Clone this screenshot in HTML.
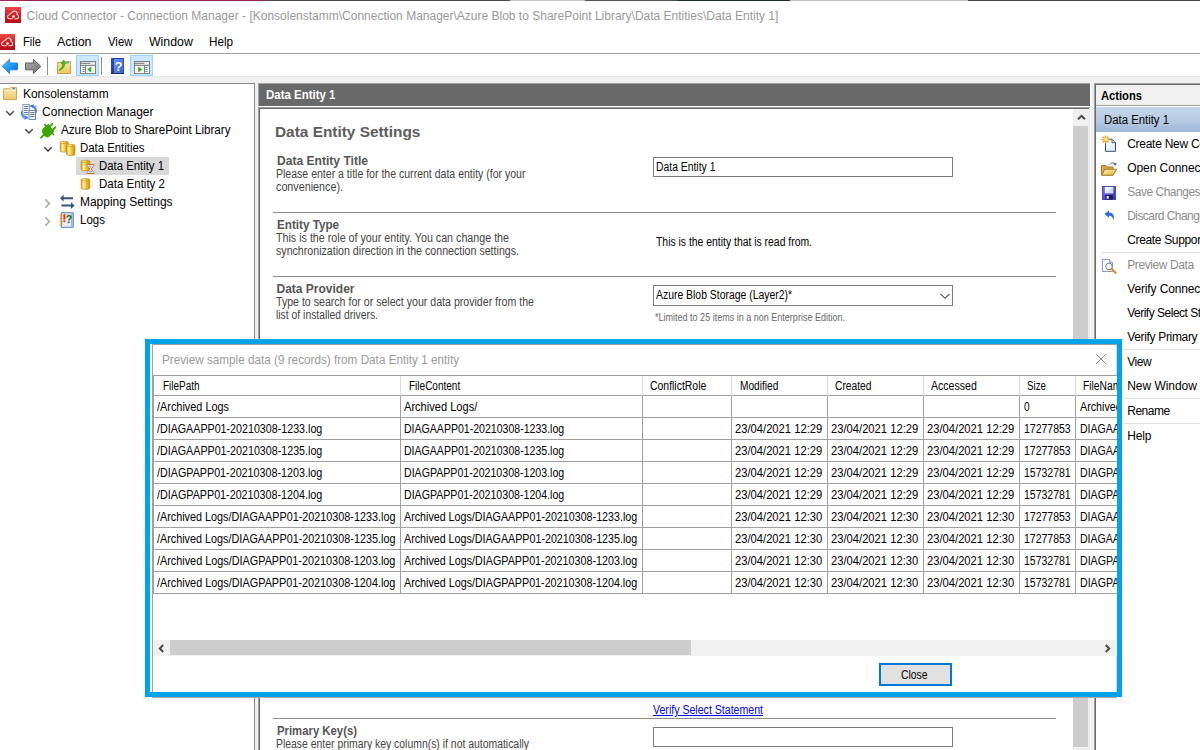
<!DOCTYPE html><html lang="en"><head><meta charset="utf-8"><title>Cloud Connector - Connection Manager</title><style>
*{box-sizing:border-box}
html,body{margin:0;padding:0}
body{width:1200px;height:750px;overflow:hidden;background:#fff;position:relative;
 font-family:"Liberation Sans",sans-serif;font-size:12px;color:#000}
.abs,span,a,h1,h2,p,li,div,svg,button,input,label,table{position:absolute}
td,th{position:relative;padding:0;font-weight:normal;overflow:hidden}
span,a,h1,h2,p,label{white-space:pre;margin:0;font-weight:normal}
ul{list-style:none;margin:0;padding:0}
.hl{background:#cce8ff;border:1px solid #99d1ff}
.sep{background:#8d8d8d;width:1px}
.line{height:1px;background:#a0a0a0}
</style></head><body>
<div style="left:0;top:0;width:1200px;height:1px;background:linear-gradient(90deg,#a5234f 0,#a5234f 265px,#4a4a4a 265px,#4a4a4a 510px,#c8c8c8 510px,#c8c8c8 585px,#555 585px,#555 677px,#20302c 677px,#20302c 790px,#bbb 790px,#bbb 968px,#444 968px)"></div>
<header style="position:absolute;left:0;top:1px;width:1200px;height:29px;background:#fff">
<svg style="left:5px;top:6px" width="16" height="16" viewBox="0 0 16 16">
<defs><linearGradient id="rg5" x1="0" y1="0" x2="0" y2="1"><stop offset="0" stop-color="#f04848"/><stop offset="0.5" stop-color="#d81c24"/><stop offset="1" stop-color="#b40f16"/></linearGradient></defs>
<rect width="16" height="16" fill="url(#rg5)"/>
<path d="M7.4 11.7 L4.6 11.7 C2.2 11.7 1.6 8.8 4 7.9 C4.6 7 5.6 6.4 6.4 5.9 C7.4 4.6 9 3.8 10.4 4.2 C11.8 4.6 12.4 6.2 12 7.6 C14.2 8.2 14.2 11.7 11.8 11.7 L9.9 11.7" fill="none" stroke="#fff" stroke-opacity="0.85" stroke-width="1.05" stroke-linecap="round" stroke-linejoin="round"/>
<circle cx="8.5" cy="9.5" r="1.35" fill="#fff"/>
</svg>
<span style="left:26.60px;top:8px;font-size:12px;line-height:14px;color:#999;">Cloud Connector - Connection Manager - [Konsolenstamm\Connection Manager\Azure Blob to SharePoint Library\Data Entities\Data Entity 1]</span>
</header>
<nav style="position:absolute;left:0;top:30px;width:1200px;height:24px;background:#fff;border-bottom:1px solid #a0a0a0">
<svg style="left:-1px;top:4px" width="16" height="16" viewBox="0 0 16 16">
<defs><linearGradient id="rg-1" x1="0" y1="0" x2="0" y2="1"><stop offset="0" stop-color="#f04848"/><stop offset="0.5" stop-color="#d81c24"/><stop offset="1" stop-color="#b40f16"/></linearGradient></defs>
<rect width="16" height="16" fill="url(#rg-1)"/>
<path d="M7.4 11.7 L4.6 11.7 C2.2 11.7 1.6 8.8 4 7.9 C4.6 7 5.6 6.4 6.4 5.9 C7.4 4.6 9 3.8 10.4 4.2 C11.8 4.6 12.4 6.2 12 7.6 C14.2 8.2 14.2 11.7 11.8 11.7 L9.9 11.7" fill="none" stroke="#fff" stroke-opacity="0.85" stroke-width="1.05" stroke-linecap="round" stroke-linejoin="round"/>
<circle cx="8.5" cy="9.5" r="1.35" fill="#fff"/>
</svg>
<span style="left:23.40px;top:5px;font-size:12px;line-height:14px;transform:scaleX(0.9254);transform-origin:0 0;">File</span>
<span style="left:57.30px;top:5px;font-size:12px;line-height:14px;transform:scaleX(1.0342);transform-origin:0 0;">Action</span>
<span style="left:108.30px;top:5px;font-size:12px;line-height:14px;transform:scaleX(0.9459);transform-origin:0 0;">View</span>
<span style="left:149.00px;top:5px;font-size:12px;line-height:14px;transform:scaleX(1.0261);transform-origin:0 0;">Window</span>
<span style="left:209.30px;top:5px;font-size:12px;line-height:14px;transform:scaleX(0.9762);transform-origin:0 0;">Help</span>
</nav>
<div style="left:0;top:54px;width:1200px;height:22px;background:#fff">
<svg style="left:1px;top:4px" width="18" height="17" viewBox="0 0 18 17">
<defs><linearGradient id="ba" x1="0" y1="0" x2="1" y2="1"><stop offset="0" stop-color="#5ec0ff"/><stop offset="0.55" stop-color="#1e9af0"/><stop offset="1" stop-color="#0058c0"/></linearGradient></defs>
<path d="M1.2 8.4 L8.6 1.3 L8.6 5.0 L16.5 5.0 L16.5 11.8 L8.6 11.8 L8.6 15.6 Z" fill="url(#ba)" stroke="#2f86d8" stroke-width="1" stroke-linejoin="round"/>
</svg>
<svg style="left:24px;top:4px" width="18" height="17" viewBox="0 0 18 17">
<defs><linearGradient id="fa" x1="0" y1="0" x2="1" y2="1"><stop offset="0" stop-color="#b4b4b4"/><stop offset="0.55" stop-color="#8c8c8c"/><stop offset="1" stop-color="#6e6e6e"/></linearGradient></defs>
<path d="M16.8 8.4 L9.4 1.3 L9.4 5.0 L1.5 5.0 L1.5 11.8 L9.4 11.8 L9.4 15.6 Z" fill="url(#fa)" stroke="#5c5c5c" stroke-width="1" stroke-linejoin="round"/>
</svg>
<div class="sep" style="left:47px;top:3px;height:18px"></div>
<svg style="left:56px;top:4px" width="17" height="17" viewBox="0 0 17 17">
<defs><linearGradient id="fo" x1="0" y1="0" x2="0" y2="1"><stop offset="0" stop-color="#fbe7a2"/><stop offset="1" stop-color="#edc660"/></linearGradient></defs>
<path d="M1.5 4.5 L9 4.5 L10 3.5 L14.5 3.5 L14.5 15.5 L1.5 15.5 Z" fill="url(#fo)" stroke="#c9a14a" stroke-width="1"/>
<path d="M1.5 6.5h13" stroke="#f7dc8c" stroke-width="1"/>
<rect x="10.5" y="4" width="2.5" height="1.3" fill="#4a90e0"/>
<path d="M3.2 11.5 C5.5 10.5 6.5 8.5 6.6 5.5 L5 5.5 L7.6 2 L10.4 5.5 L8.8 5.5 C8.8 9 7 11.3 3.6 12.4 Z" fill="#3ec020" stroke="#2a9a10" stroke-width="0.5"/>
</svg>
<div class="hl" style="left:76px;top:1px;width:23px;height:21px"></div>
<svg style="left:80px;top:7px" width="16" height="13" viewBox="0 0 16 13">
<rect x="0.5" y="0.5" width="15" height="12" fill="#fff" stroke="#808080"/>
<rect x="1" y="1" width="14" height="3.5" fill="#d9d9d9"/>
<path d="M1 2.5h9" stroke="#8a8a8a" stroke-width="1"/>
<path d="M1 4.5h14" stroke="#8a8a8a" stroke-width="1"/>
<rect x="11" y="1.5" width="1.4" height="1.4" fill="#fff"/><rect x="13" y="1.5" width="1.4" height="1.4" fill="#fff"/>
<rect x="1.5" y="5.5" width="4" height="6" fill="#fff" stroke="none"/>
<rect x="6" y="5.5" width="8.5" height="6" fill="#f4f4f4"/>
<path d="M2.5 6.5h2M2.5 8.5h2M2.5 10.5h2" stroke="#3a78d8" stroke-width="1"/>
<path d="M5.5 5v7" stroke="#808080" stroke-width="1"/>
<path d="M11 6 L11 11 L7.6 8.5 Z" fill="#3cb41e" stroke="#2e9a14" stroke-width="0.5"/>
</svg>
<div class="sep" style="left:101px;top:3px;height:18px"></div>
<svg style="left:111px;top:4px" width="13" height="16" viewBox="0 0 13 16">
<defs><linearGradient id="hb" x1="0" y1="0" x2="1" y2="1"><stop offset="0" stop-color="#7094f0"/><stop offset="1" stop-color="#3a60d0"/></linearGradient><linearGradient id="hs" x1="0" y1="0" x2="0" y2="1"><stop offset="0" stop-color="#2054d0"/><stop offset="1" stop-color="#2a3a7a"/></linearGradient></defs>
<rect width="13" height="16" fill="#1f3fae"/>
<rect x="0" y="0" width="3" height="16" fill="url(#hs)"/>
<rect x="3" y="1" width="9.4" height="14.2" fill="url(#hb)"/>
<rect x="0" y="15" width="13" height="1" fill="#1b2a68"/>
<text x="8" y="13.2" font-family="Liberation Sans" font-weight="bold" font-size="13.5" fill="#22347a" text-anchor="middle">?</text>
<text x="7.5" y="12.8" font-family="Liberation Sans" font-weight="bold" font-size="13.5" fill="#fff" text-anchor="middle">?</text>
</svg>
<div class="hl" style="left:130px;top:1px;width:23px;height:21px"></div>
<svg style="left:134px;top:7px" width="16" height="13" viewBox="0 0 16 13">
<rect x="0.5" y="0.5" width="15" height="12" fill="#fff" stroke="#808080"/>
<rect x="1" y="1" width="14" height="3.5" fill="#d9d9d9"/>
<path d="M1 2.5h9" stroke="#8a8a8a" stroke-width="1"/>
<path d="M1 4.5h14" stroke="#8a8a8a" stroke-width="1"/>
<rect x="11" y="1.5" width="1.4" height="1.4" fill="#fff"/><rect x="13" y="1.5" width="1.4" height="1.4" fill="#fff"/>
<rect x="10.5" y="5.5" width="4" height="6" fill="#fff" stroke="none"/>
<rect x="1.5" y="5.5" width="8.5" height="6" fill="#f4f4f4"/>
<path d="M11.5 6.5h2M11.5 8.5h2M11.5 10.5h2" stroke="#3a78d8" stroke-width="1"/>
<path d="M10.5 5v7" stroke="#808080" stroke-width="1"/>
<path d="M4.5 6 L4.5 11 L7.9 8.5 Z" fill="#3cb41e" stroke="#2e9a14" stroke-width="0.5"/>
</svg>
</div>
<div style="left:0;top:76px;width:1200px;height:8px;background:#f0f0f0;border-top:1px solid #e6e6e6"></div>
<div style="left:0;top:84px;width:1200px;height:666px;background:#f0f0f0"></div>
<aside style="position:absolute;left:0;top:83px;width:255px;height:667px;background:#fff;border-top:1px solid #828790;border-right:1px solid #828790">
<ul>
<li>
<svg style="left:2px;top:2px" width="16" height="15" viewBox="0 0 16 15">
<defs><linearGradient id="tf" x1="0" y1="0" x2="0" y2="1"><stop offset="0" stop-color="#fcebb0"/><stop offset="1" stop-color="#efc866"/></linearGradient></defs>
<path d="M1.5 2.8 L7.6 2.8 L8.8 1.5 L14.5 1.5 L14.5 13.5 L1.5 13.5 Z" fill="url(#tf)" stroke="#cfa950" stroke-width="1"/>
<path d="M2 4.5h12" stroke="#fdf3cf" stroke-width="1"/>
<rect x="10.5" y="2" width="2.6" height="1.3" fill="#4a90e0"/></svg>
<span style="left:23.10px;top:3px;font-size:12px;line-height:14px;transform:scaleX(0.9948);transform-origin:0 0;">Konsolenstamm</span>
</li>
<li>
<svg style="left:4.5px;top:25.5px" width="10" height="7" viewBox="0 0 10 7"><path d="M1.3 1.3 L5 5 L8.7 1.3" fill="none" stroke="#404040" stroke-width="1.4"/></svg>
<svg style="left:21px;top:20px" width="17" height="16" viewBox="0 0 17 16">
<path d="M9.5 2.2 C13.6 1.6 16 5 14.6 9" fill="none" stroke="#3f7ae0" stroke-width="2"/>
<path d="M9.2 2.2 L12.6 0 L12.4 4.6 Z" fill="#3f7ae0"/><path d="M12.6 2.2 L15.6 1.6 L14.6 4.6" fill="#6ea0f0"/>
<path d="M6.6 13.6 C2.6 14.4 0 11 1.4 7" fill="none" stroke="#3f7ae0" stroke-width="2"/>
<path d="M7 13.6 L3.6 15.9 L3.8 11.2 Z" fill="#3f7ae0"/><path d="M0.2 12.8 L3.6 11 L3.4 15 Z" fill="#6ea0f0"/>
<rect x="1.8" y="0.5" width="6.6" height="10" fill="#fbfcff" stroke="#7f95c4" stroke-width="0.9"/>
<path d="M3 2.5h4.4M3 4.5h4.4M3 6.5h4.4M3 8.5h4.4" stroke="#4f6aa8" stroke-width="0.9"/>
<rect x="8" y="6.4" width="6.6" height="9" fill="#fbfcff" stroke="#5c74a8" stroke-width="0.9"/>
<path d="M9.2 8.5h4.4M9.2 10.5h4.4M9.2 12.5h4.4" stroke="#4f6aa8" stroke-width="0.9"/>
</svg>
<span style="left:42.10px;top:21px;font-size:12px;line-height:14px;">Connection Manager</span>
</li>
<li>
<svg style="left:23.5px;top:43.5px" width="10" height="7" viewBox="0 0 10 7"><path d="M1.3 1.3 L5 5 L8.7 1.3" fill="none" stroke="#404040" stroke-width="1.4"/></svg>
<svg style="left:40px;top:39px" width="17" height="16" viewBox="0 0 17 16">
<g fill="#3ea600" stroke="#3ea600" stroke-linejoin="round" stroke-linecap="round">
<path d="M3 6.2 L8.4 1.8 L13.4 8.4 L8.4 13.6 C5.2 14.4 1.6 10 3 6.2 Z" stroke-width="1.4"/>
<path d="M4.8 1.6 L6.4 3.4" stroke-width="1.8" fill="none"/>
<path d="M9.8 3.4 L12.2 0.9" stroke-width="2" fill="none"/><path d="M12.8 7 L15.3 4.4" stroke-width="2" fill="none"/>
<path d="M4 11.6 L1.1 14.6" stroke-width="2" fill="none"/>
<path d="M12.6 10.4 L13.6 11.6" stroke-width="1.6" fill="none"/>
</g></svg>
<span style="left:61.10px;top:39px;font-size:12px;line-height:14px;transform:scaleX(0.9699);transform-origin:0 0;">Azure Blob to SharePoint Library</span>
</li>
<li>
<svg style="left:42.5px;top:61.5px" width="10" height="7" viewBox="0 0 10 7"><path d="M1.3 1.3 L5 5 L8.7 1.3" fill="none" stroke="#404040" stroke-width="1.4"/></svg>
<svg style="left:59px;top:56px" width="18" height="17" viewBox="0 0 18 17"><defs><linearGradient id="cy" x1="0" y1="0" x2="1" y2="0"><stop offset="0" stop-color="#dca010"/><stop offset="0.28" stop-color="#fff2ac"/><stop offset="0.65" stop-color="#f0b820"/><stop offset="1" stop-color="#d09008"/></linearGradient></defs><path d="M1.2999999999999998 2.5 L1.2999999999999998 10.900000000000002 A4.0 1.2 0 0 0 9.3 10.900000000000002 L9.3 2.5 Z" fill="url(#cy)" stroke="#b98a1c" stroke-width="0.7"/><ellipse cx="5.3" cy="2.5" rx="4.0" ry="1.2" fill="url(#cy)" stroke="#c99a2a" stroke-width="0.7"/><path d="M7.499999999999999 5.5 L7.499999999999999 14.3 A4.2 1.2 0 0 0 15.899999999999999 14.3 L15.899999999999999 5.5 Z" fill="url(#cy)" stroke="#b98a1c" stroke-width="0.7"/><ellipse cx="11.7" cy="5.5" rx="4.2" ry="1.2" fill="url(#cy)" stroke="#c99a2a" stroke-width="0.7"/></svg>
<span style="left:79.90px;top:57px;font-size:12px;line-height:14px;transform:scaleX(0.9479);transform-origin:0 0;">Data Entities</span>
</li>
<li>
<div style="left:76px;top:73px;width:93px;height:18px;background:#d9d9d9"></div>
<svg style="left:79px;top:75px" width="17" height="16" viewBox="0 0 17 16"><path d="M2.2 2.4 L2.2 10.6 A4.3 1.2 0 0 0 10.8 10.6 L10.8 2.4 Z" fill="url(#cy)" stroke="#b98a1c" stroke-width="0.7"/><ellipse cx="6.5" cy="2.4" rx="4.3" ry="1.2" fill="url(#cy)" stroke="#c99a2a" stroke-width="0.7"/>
<path d="M8 5.5 L15 5.5 L15 6.4 L12.2 10 L15 13.6 L15 14.5 L8 14.5 L8 13.6 L10.8 10 L8 6.4 Z" fill="#fff" stroke="#d8601a" stroke-width="0.9"/>
<path d="M9.2 6.5 L13.8 6.5 L11.5 9.6 Z" fill="#9cc4f4"/><path d="M9.2 13.6 L13.8 13.6 L11.5 11.2 Z" fill="#6aa0e8"/>
</svg>
<span style="left:98.60px;top:75px;font-size:12px;line-height:14px;transform:scaleX(0.9461);transform-origin:0 0;">Data Entity 1</span>
</li>
<li>
<svg style="left:79px;top:93px" width="14" height="14" viewBox="0 0 14 14"><path d="M2.2 2.7 L2.2 11.100000000000001 A4.3 1.2 0 0 0 10.8 11.100000000000001 L10.8 2.7 Z" fill="url(#cy)" stroke="#b98a1c" stroke-width="0.7"/><ellipse cx="6.5" cy="2.7" rx="4.3" ry="1.2" fill="url(#cy)" stroke="#c99a2a" stroke-width="0.7"/></svg>
<span style="left:98.60px;top:93px;font-size:12px;line-height:14px;transform:scaleX(0.9607);transform-origin:0 0;">Data Entity 2</span>
</li>
<li>
<svg style="left:44px;top:114px" width="7" height="11" viewBox="0 0 7 11"><path d="M1.3 1.3 L5.3 5.5 L1.3 9.7" fill="none" stroke="#adadad" stroke-width="1.8"/></svg>
<svg style="left:59px;top:110px" width="17" height="16" viewBox="0 0 17 16">
<g fill="#34527e"><path d="M1 4.2 L4.6 0.8 L4.6 3.2 L14 3.2 L14 5.2 L4.6 5.2 L4.6 7.6 Z"/>
<path d="M15.6 11.6 L12 8.2 L12 10.6 L2.4 10.6 L2.4 12.6 L12 12.6 L12 15 Z"/></g></svg>
<span style="left:79.90px;top:111px;font-size:12px;line-height:14px;">Mapping Settings</span>
</li>
<li>
<svg style="left:44px;top:132px" width="7" height="11" viewBox="0 0 7 11"><path d="M1.3 1.3 L5.3 5.5 L1.3 9.7" fill="none" stroke="#adadad" stroke-width="1.8"/></svg>
<svg style="left:59px;top:128px" width="16" height="16" viewBox="0 0 16 16">
<rect x="2.2" y="0.8" width="12" height="14.4" rx="0.8" fill="#e8eef8" stroke="#5478b0" stroke-width="1.1"/>
<path d="M12.6 1.5v13" stroke="#9cb4d8" stroke-width="1.4"/>
<path d="M7.5 3h4M7.5 5h4M7.5 11h3" stroke="#9cb0d0" stroke-width="0.7"/>
<g stroke="#e8a818" stroke-width="1.2" stroke-linecap="round"><path d="M1 3.2h2.2M1 6.2h2.2M1 9.2h2.2M1 12.2h2.2"/></g>
<rect x="4.4" y="2.2" width="2" height="5.4" fill="#f02810"/><rect x="4.4" y="8.4" width="2" height="1.8" fill="#f02810"/>
<text x="10" y="11.4" font-family="Liberation Sans" font-weight="bold" font-size="10.5" fill="#147814" text-anchor="middle">?</text>
</svg>
<span style="left:79.90px;top:129px;font-size:12px;line-height:14px;transform:scaleX(0.9604);transform-origin:0 0;">Logs</span>
</li>
</ul></aside>
<div style="left:258px;top:83px;width:832px;height:23px;background:#696969;border-top:1px solid #a0a0a0;border-left:1px solid #a0a0a0">
<h1 style="left:6.50px;top:4px;font-size:12.5px;line-height:14px;font-weight:bold;color:#fff;transform:scaleX(0.9179);transform-origin:0 0;">Data Entity 1</h1>
</div>
<div style="left:258px;top:106px;width:832px;height:1px;background:#fff"></div>
<div style="left:1090px;top:83px;width:1px;height:667px;background:#fff"></div>
<main style="position:absolute;left:258px;top:107px;width:832px;height:643px;background:#fff;border-top:1px solid #a0a0a0;border-left:1px solid #a0a0a0;overflow:hidden">
<div style="left:0;top:0;width:831px;height:1px;background:#696969"></div><div style="left:0;top:0;width:1px;height:643px;background:#696969"></div>
<h1 style="left:16.30px;top:16px;font-size:14px;line-height:16px;font-weight:bold;color:#5c5c5c;transform:scaleX(1.0994);transform-origin:0 0;">Data Entity Settings</h1>
<h2 style="left:17.50px;top:46px;font-size:12px;line-height:14px;font-weight:bold;color:#555;transform:scaleX(1.0059);transform-origin:0 0;">Data Entity Title</h2>
<p style="left:17.00px;top:59px;font-size:12px;line-height:14px;color:#444;transform:scaleX(0.8780);transform-origin:0 0;">Please enter a title for the current data entity (for your</p>
<p style="left:17.00px;top:72px;font-size:12px;line-height:14px;color:#444;transform:scaleX(0.8967);transform-origin:0 0;">convenience).</p>
<div class="line" style="left:14px;top:104px;width:783px;background:#8c8c8c"></div>
<h2 style="left:17.50px;top:110px;font-size:12px;line-height:14px;font-weight:bold;color:#555;transform:scaleX(0.9718);transform-origin:0 0;">Entity Type</h2>
<p style="left:17.00px;top:123px;font-size:12px;line-height:14px;color:#444;transform:scaleX(0.8918);transform-origin:0 0;">This is the role of your entity. You can change the</p>
<p style="left:17.00px;top:136px;font-size:12px;line-height:14px;color:#444;transform:scaleX(0.8863);transform-origin:0 0;">synchronization direction in the connection settings.</p>
<div class="line" style="left:14px;top:168px;width:783px;background:#8c8c8c"></div>
<h2 style="left:17.50px;top:174px;font-size:12px;line-height:14px;font-weight:bold;color:#555;">Data Provider</h2>
<p style="left:17.00px;top:187px;font-size:12px;line-height:14px;color:#444;transform:scaleX(0.8831);transform-origin:0 0;">Type to search for or select your data provider from the</p>
<p style="left:17.00px;top:200px;font-size:12px;line-height:14px;color:#444;transform:scaleX(0.8641);transform-origin:0 0;">list of installed drivers.</p>
<div style="left:394px;top:49px;width:300px;height:20px;border:1px solid #7a7a7a;background:#fff">
<span style="left:2.30px;top:2px;font-size:12px;line-height:14px;transform:scaleX(0.8646);transform-origin:0 0;">Data Entity 1</span>
</div>
<span style="left:396.90px;top:127px;font-size:12px;line-height:14px;transform:scaleX(0.8663);transform-origin:0 0;">This is the entity that is read from.</span>
<div style="left:394px;top:177px;width:300px;height:21px;border:1px solid #7a7a7a;background:#fff">
<span style="left:2.30px;top:2px;font-size:12px;line-height:14px;transform:scaleX(0.8676);transform-origin:0 0;">Azure Blob Storage (Layer2)*</span>
<svg style="left:285px;top:7px" width="12" height="7" viewBox="0 0 12 7"><path d="M1.5 1 L6 5.2 L10.5 1" fill="none" stroke="#606060" stroke-width="1.2"/></svg>
</div>
<span style="left:396.00px;top:204px;font-size:10px;line-height:11px;color:#696969;transform:scaleX(0.9019);transform-origin:0 0;">*Limited to 25 items in a non Enterprise Edition.</span>
<a style="left:394.00px;top:595px;font-size:12px;line-height:14px;color:#0000ff;transform:scaleX(0.8819);transform-origin:0 0;text-decoration:underline;">Verify Select Statement</a>
<div class="line" style="left:14px;top:610px;width:783px;background:#8c8c8c"></div>
<h2 style="left:17.50px;top:616px;font-size:12px;line-height:14px;font-weight:bold;color:#555;transform:scaleX(0.9443);transform-origin:0 0;">Primary Key(s)</h2>
<p style="left:17.00px;top:629px;font-size:12px;line-height:14px;color:#444;transform:scaleX(0.8681);transform-origin:0 0;">Please enter primary key column(s) if not automatically</p>
<div style="left:394px;top:619px;width:300px;height:20px;border:1px solid #7a7a7a;background:#fff"></div>
<div style="left:830px;top:0;width:1px;height:642px;background:#e8e8e8"></div>
<div style="left:814px;top:1px;width:16px;height:641px;background:#f0f0f0">
<svg style="left:4px;top:5px" width="9" height="7" viewBox="0 0 9 7"><path d="M1 5.2 L4.5 1.8 L8 5.2" fill="none" stroke="#4a4a4a" stroke-width="2"/></svg>
<div style="left:0;top:17px;width:15px;height:621px;background:#cdcdcd"></div>
</div>
</main>
<aside style="position:absolute;left:1094px;top:83px;width:106px;height:667px;background:#fff;border-top:1px solid #a0a0a0;border-left:1px solid #a0a0a0;overflow:hidden">
<div style="left:0;top:0;width:106px;height:1px;background:#696969"></div><div style="left:0;top:0;width:1px;height:667px;background:#696969"></div>
<div style="left:1px;top:1px;width:104px;height:21px;background:#f0f0f0;border-bottom:1px solid #a0a0a0"></div>
<h2 style="left:6.20px;top:5px;font-size:12px;line-height:14px;font-weight:bold;transform:scaleX(0.9315);transform-origin:0 0;">Actions</h2>
<div style="left:1px;top:23px;width:104px;height:25px;background:linear-gradient(#c3d5ea,#bccfe6 45%,#9db7d6)"></div>
<span style="left:8.60px;top:29px;font-size:12px;line-height:14px;transform:scaleX(0.9461);transform-origin:0 0;">Data Entity 1</span>
<ul>
<div style="left:6px;top:168px;width:100px;height:1px;background:#e2e2e2"></div>
<div style="left:6px;top:265px;width:100px;height:1px;background:#e2e2e2"></div>
<div style="left:6px;top:314px;width:100px;height:1px;background:#e2e2e2"></div>
<div style="left:6px;top:339px;width:100px;height:1px;background:#e2e2e2"></div>
<li>
<svg style="left:6px;top:51px" width="17" height="18" viewBox="0 0 17 18">
<defs><linearGradient id="nd" x1="0" y1="0" x2="1" y2="1"><stop offset="0" stop-color="#ffffff"/><stop offset="1" stop-color="#dfe6f6"/></linearGradient></defs>
<path d="M4.5 4.2 L11 4.2 L14.5 7.7 L14.5 16.3 L4.5 16.3 Z" fill="url(#nd)" stroke="#3b4a6b" stroke-width="1"/>
<path d="M11 4.2 L11 7.7 L14.5 7.7" fill="#cfd8ec" stroke="#3b4a6b" stroke-width="0.8"/>
<g stroke="#ff9a10" stroke-width="1.3"><path d="M4.6 0.6v8M0.6 4.6h8M1.8 1.8l5.6 5.6M7.4 1.8l-5.6 5.6"/></g><circle cx="4.6" cy="4.6" r="2" fill="#ffd84a"/><circle cx="4.6" cy="4.6" r="1" fill="#fffbe0"/></svg>
<span style="left:32.20px;top:53px;font-size:12px;line-height:14px;letter-spacing:-0.273px;">Create New Connection</span>
</li>
<li>
<svg style="left:5px;top:77px" width="18" height="16" viewBox="0 0 18 16">
<defs><linearGradient id="of" x1="0" y1="0" x2="1" y2="1"><stop offset="0" stop-color="#fdeeb0"/><stop offset="1" stop-color="#e8b040"/></linearGradient></defs>
<path d="M1.5 14 L1.5 4.6 L6 4.6 L7.2 6 L13 6 L13 14 Z" fill="#dca83c" stroke="#9a7424" stroke-width="0.9"/>
<path d="M1.6 14.2 L4.8 8.2 L16.6 8.2 L13.2 14.2 Z" fill="url(#of)" stroke="#9a7424" stroke-width="0.9"/>
<path d="M10 3.6 C11.5 1.4 14.2 1.4 15.4 3.4" fill="none" stroke="#4a5878" stroke-width="1"/><path d="M16.4 1.6 L16 4.6 L13.4 3.6 Z" fill="#4a5878"/></svg>
<span style="left:32.20px;top:77px;font-size:12px;line-height:14px;letter-spacing:-0.066px;">Open Connection File</span>
</li>
<li>
<svg style="left:7px;top:102px" width="14" height="14" viewBox="0 0 14 14">
<defs><linearGradient id="sv" x1="0" y1="0" x2="1" y2="1"><stop offset="0" stop-color="#7474e8"/><stop offset="1" stop-color="#3434a8"/></linearGradient></defs>
<rect x="0.5" y="0.5" width="13" height="13" fill="url(#sv)" stroke="#4a4ac0"/>
<rect x="2.8" y="1" width="8.4" height="6.2" fill="#f2f4ff"/><path d="M2.8 7.2 L11.2 1 L11.2 7.2 Z" fill="#d4daf4"/>
<rect x="3.4" y="9" width="7.4" height="4.6" fill="#1c1c58"/><rect x="4.6" y="10" width="2.2" height="2.8" fill="#e0e0f0"/></svg>
<span style="left:32.20px;top:101px;font-size:12px;line-height:14px;color:#8c8c8c;letter-spacing:-0.485px;">Save Changes</span>
</li>
<li>
<svg style="left:9px;top:126px" width="12" height="11" viewBox="0 0 12 11">
<path d="M0.4 4 L5 0.4 L5 2.6 C9.2 2.6 10.8 5.6 9.6 10.4 C9 7.4 7.6 5.8 5 5.8 L5 7.8 Z" fill="#2f6fd8"/></svg>
<span style="left:32.20px;top:125px;font-size:12px;line-height:14px;color:#8c8c8c;letter-spacing:-0.559px;">Discard Changes</span>
</li>
<li>
<span style="left:32.20px;top:149px;font-size:12px;line-height:14px;letter-spacing:-0.339px;">Create Support File</span>
</li>
<li>
<svg style="left:6px;top:174px" width="17" height="17" viewBox="0 0 17 17">
<path d="M1.5 1.5 L8.5 1.5 L11.5 4.5 L11.5 13.5 L1.5 13.5 Z" fill="#fbfcff" stroke="#7f8ea8" stroke-width="0.9"/>
<path d="M8.5 1.5 L8.5 4.5 L11.5 4.5" fill="#dde4f0" stroke="#7f8ea8" stroke-width="0.7"/>
<circle cx="8" cy="8.4" r="3.3" fill="#eef4fb" fill-opacity="0.85" stroke="#6a7890" stroke-width="1"/>
<path d="M10.6 11 L14.6 14.8" stroke="#e08a28" stroke-width="2.2" stroke-linecap="round"/></svg>
<span style="left:32.20px;top:174px;font-size:12px;line-height:14px;color:#8c8c8c;letter-spacing:-0.398px;">Preview Data</span>
</li>
<li>
<span style="left:32.20px;top:198px;font-size:12px;line-height:14px;letter-spacing:-0.127px;">Verify Connection String</span>
</li>
<li>
<span style="left:32.20px;top:222px;font-size:12px;line-height:14px;letter-spacing:-0.5px;">Verify Select Statement</span>
</li>
<li>
<span style="left:32.20px;top:246px;font-size:12px;line-height:14px;letter-spacing:-0.33px;">Verify Primary Key</span>
</li>
<li>
<span style="left:32.20px;top:271px;font-size:12px;line-height:14px;letter-spacing:-0.399px;">View</span>
</li>
<li>
<span style="left:32.20px;top:295px;font-size:12px;line-height:14px;letter-spacing:-0.033px;">New Window</span>
</li>
<li>
<span style="left:32.20px;top:320px;font-size:12px;line-height:14px;letter-spacing:-0.477px;">Rename</span>
</li>
<li>
<span style="left:32.20px;top:345px;font-size:12px;line-height:14px;letter-spacing:-0.122px;">Help</span>
</li>
</ul></aside>
<section style="position:absolute;left:145px;top:339px;width:977px;height:358px;border:5px solid #00a2e8;background:#fff;overflow:hidden">
<div style="left:2px;top:0;width:965px;height:1px;background:#a0a0a0"></div><div style="left:2px;top:0;width:1px;height:348px;background:#a0a0a0"></div><div style="left:966px;top:1px;width:1px;height:347px;background:#dadada"></div>
<h2 style="left:11.60px;top:9px;font-size:12px;line-height:14px;color:#9a9a9a;transform:scaleX(0.9766);transform-origin:0 0;">Preview sample data (9 records) from Data Entity 1 entity</h2>
<svg style="left:945px;top:9px" width="12" height="12" viewBox="0 0 12 12"><path d="M1 1 L11 11 M11 1 L1 11" stroke="#8a8a8a" stroke-width="1" fill="none"/></svg>
<div style="left:3px;top:31px;width:964px;height:265px;border-top:1px solid #a0a0a0;overflow:hidden;background:#fff">
<table style="left:0;top:0;border-collapse:separate;border-spacing:0;table-layout:fixed;width:1043px;font-size:11px">
<colgroup><col style="width:248px"><col style="width:242px"><col style="width:89px"><col style="width:96px"><col style="width:96px"><col style="width:96px"><col style="width:56px"><col style="width:120px"></colgroup>
<thead><tr style="height:20px">
<th style="height:20px;border-left:1px solid #a0a0a0;border-right:1px solid #dcdcdc;border-bottom:1px solid #a0a0a0"><span style="left:8.50px;top:3px;font-size:12px;line-height:14px;transform:scaleX(0.8290);transform-origin:0 0;">FilePath</span></th>
<th style="height:20px;border-right:1px solid #dcdcdc;border-bottom:1px solid #a0a0a0"><span style="left:7.70px;top:3px;font-size:12px;line-height:14px;transform:scaleX(0.8342);transform-origin:0 0;">FileContent</span></th>
<th style="height:20px;border-right:1px solid #dcdcdc;border-bottom:1px solid #a0a0a0"><span style="left:7.00px;top:3px;font-size:12px;line-height:14px;transform:scaleX(0.8701);transform-origin:0 0;">ConflictRole</span></th>
<th style="height:20px;border-right:1px solid #dcdcdc;border-bottom:1px solid #a0a0a0"><span style="left:7.50px;top:3px;font-size:12px;line-height:14px;transform:scaleX(0.8466);transform-origin:0 0;">Modified</span></th>
<th style="height:20px;border-right:1px solid #dcdcdc;border-bottom:1px solid #a0a0a0"><span style="left:7.00px;top:3px;font-size:12px;line-height:14px;transform:scaleX(0.8547);transform-origin:0 0;">Created</span></th>
<th style="height:20px;border-right:1px solid #dcdcdc;border-bottom:1px solid #a0a0a0"><span style="left:7.20px;top:3px;font-size:12px;line-height:14px;transform:scaleX(0.8802);transform-origin:0 0;">Accessed</span></th>
<th style="height:20px;border-right:1px solid #dcdcdc;border-bottom:1px solid #a0a0a0"><span style="left:7.00px;top:3px;font-size:12px;line-height:14px;transform:scaleX(0.8139);transform-origin:0 0;">Size</span></th>
<th style="height:20px;border-right:1px solid #dcdcdc;border-bottom:1px solid #a0a0a0"><span style="left:7.30px;top:3px;font-size:12px;line-height:14px;transform:scaleX(0.8567);transform-origin:0 0;">FileName</span></th>
</tr></thead><tbody>
<tr style="height:22px">
<td style="height:22px;border-left:1px solid #a0a0a0;border-right:1px solid #a0a0a0;border-bottom:1px solid #a0a0a0"><span style="left:3.10px;top:4px;font-size:12px;line-height:14px;transform:scaleX(0.9069);transform-origin:0 0;">/Archived Logs</span></td>
<td style="height:22px;border-right:1px solid #a0a0a0;border-bottom:1px solid #a0a0a0"><span style="left:3.10px;top:4px;font-size:12px;line-height:14px;transform:scaleX(0.9233);transform-origin:0 0;">Archived Logs/</span></td>
<td style="height:22px;border-right:1px solid #a0a0a0;border-bottom:1px solid #a0a0a0"></td>
<td style="height:22px;border-right:1px solid #a0a0a0;border-bottom:1px solid #a0a0a0"></td>
<td style="height:22px;border-right:1px solid #a0a0a0;border-bottom:1px solid #a0a0a0"></td>
<td style="height:22px;border-right:1px solid #a0a0a0;border-bottom:1px solid #a0a0a0"></td>
<td style="height:22px;border-right:1px solid #a0a0a0;border-bottom:1px solid #a0a0a0"><span style="left:3.80px;top:4px;font-size:12px;line-height:14px;transform:scaleX(0.8374);transform-origin:0 0;">0</span></td>
<td style="height:22px;border-right:1px solid #a0a0a0;border-bottom:1px solid #a0a0a0"><span style="left:3.70px;top:4px;font-size:12px;line-height:14px;transform:scaleX(0.8950);transform-origin:0 0;">Archived Logs</span></td>
</tr>
<tr style="height:22px">
<td style="height:22px;border-left:1px solid #a0a0a0;border-right:1px solid #a0a0a0;border-bottom:1px solid #a0a0a0"><span style="left:3.10px;top:4px;font-size:12px;line-height:14px;transform:scaleX(0.8913);transform-origin:0 0;">/DIAGAAPP01-20210308-1233.log</span></td>
<td style="height:22px;border-right:1px solid #a0a0a0;border-bottom:1px solid #a0a0a0"><span style="left:3.10px;top:4px;font-size:12px;line-height:14px;transform:scaleX(0.8795);transform-origin:0 0;">DIAGAAPP01-20210308-1233.log</span></td>
<td style="height:22px;border-right:1px solid #a0a0a0;border-bottom:1px solid #a0a0a0"></td>
<td style="height:22px;border-right:1px solid #a0a0a0;border-bottom:1px solid #a0a0a0"><span style="left:3.30px;top:4px;font-size:12px;line-height:14px;transform:scaleX(0.9334);transform-origin:0 0;">23/04/2021 12:29</span></td>
<td style="height:22px;border-right:1px solid #a0a0a0;border-bottom:1px solid #a0a0a0"><span style="left:3.30px;top:4px;font-size:12px;line-height:14px;transform:scaleX(0.9334);transform-origin:0 0;">23/04/2021 12:29</span></td>
<td style="height:22px;border-right:1px solid #a0a0a0;border-bottom:1px solid #a0a0a0"><span style="left:3.30px;top:4px;font-size:12px;line-height:14px;transform:scaleX(0.9334);transform-origin:0 0;">23/04/2021 12:29</span></td>
<td style="height:22px;border-right:1px solid #a0a0a0;border-bottom:1px solid #a0a0a0"><span style="left:3.80px;top:4px;font-size:12px;line-height:14px;transform:scaleX(0.8747);transform-origin:0 0;">17277853</span></td>
<td style="height:22px;border-right:1px solid #a0a0a0;border-bottom:1px solid #a0a0a0"><span style="left:3.70px;top:4px;font-size:12px;line-height:14px;transform:scaleX(0.8795);transform-origin:0 0;">DIAGAAPP01-20210308-1233.log</span></td>
</tr>
<tr style="height:22px">
<td style="height:22px;border-left:1px solid #a0a0a0;border-right:1px solid #a0a0a0;border-bottom:1px solid #a0a0a0"><span style="left:3.10px;top:4px;font-size:12px;line-height:14px;transform:scaleX(0.8913);transform-origin:0 0;">/DIAGAAPP01-20210308-1235.log</span></td>
<td style="height:22px;border-right:1px solid #a0a0a0;border-bottom:1px solid #a0a0a0"><span style="left:3.10px;top:4px;font-size:12px;line-height:14px;transform:scaleX(0.8795);transform-origin:0 0;">DIAGAAPP01-20210308-1235.log</span></td>
<td style="height:22px;border-right:1px solid #a0a0a0;border-bottom:1px solid #a0a0a0"></td>
<td style="height:22px;border-right:1px solid #a0a0a0;border-bottom:1px solid #a0a0a0"><span style="left:3.30px;top:4px;font-size:12px;line-height:14px;transform:scaleX(0.9334);transform-origin:0 0;">23/04/2021 12:29</span></td>
<td style="height:22px;border-right:1px solid #a0a0a0;border-bottom:1px solid #a0a0a0"><span style="left:3.30px;top:4px;font-size:12px;line-height:14px;transform:scaleX(0.9334);transform-origin:0 0;">23/04/2021 12:29</span></td>
<td style="height:22px;border-right:1px solid #a0a0a0;border-bottom:1px solid #a0a0a0"><span style="left:3.30px;top:4px;font-size:12px;line-height:14px;transform:scaleX(0.9334);transform-origin:0 0;">23/04/2021 12:29</span></td>
<td style="height:22px;border-right:1px solid #a0a0a0;border-bottom:1px solid #a0a0a0"><span style="left:3.80px;top:4px;font-size:12px;line-height:14px;transform:scaleX(0.8747);transform-origin:0 0;">17277853</span></td>
<td style="height:22px;border-right:1px solid #a0a0a0;border-bottom:1px solid #a0a0a0"><span style="left:3.70px;top:4px;font-size:12px;line-height:14px;transform:scaleX(0.8795);transform-origin:0 0;">DIAGAAPP01-20210308-1235.log</span></td>
</tr>
<tr style="height:22px">
<td style="height:22px;border-left:1px solid #a0a0a0;border-right:1px solid #a0a0a0;border-bottom:1px solid #a0a0a0"><span style="left:3.10px;top:4px;font-size:12px;line-height:14px;transform:scaleX(0.8956);transform-origin:0 0;">/DIAGPAPP01-20210308-1203.log</span></td>
<td style="height:22px;border-right:1px solid #a0a0a0;border-bottom:1px solid #a0a0a0"><span style="left:3.10px;top:4px;font-size:12px;line-height:14px;transform:scaleX(0.8839);transform-origin:0 0;">DIAGPAPP01-20210308-1203.log</span></td>
<td style="height:22px;border-right:1px solid #a0a0a0;border-bottom:1px solid #a0a0a0"></td>
<td style="height:22px;border-right:1px solid #a0a0a0;border-bottom:1px solid #a0a0a0"><span style="left:3.30px;top:4px;font-size:12px;line-height:14px;transform:scaleX(0.9334);transform-origin:0 0;">23/04/2021 12:29</span></td>
<td style="height:22px;border-right:1px solid #a0a0a0;border-bottom:1px solid #a0a0a0"><span style="left:3.30px;top:4px;font-size:12px;line-height:14px;transform:scaleX(0.9334);transform-origin:0 0;">23/04/2021 12:29</span></td>
<td style="height:22px;border-right:1px solid #a0a0a0;border-bottom:1px solid #a0a0a0"><span style="left:3.30px;top:4px;font-size:12px;line-height:14px;transform:scaleX(0.9334);transform-origin:0 0;">23/04/2021 12:29</span></td>
<td style="height:22px;border-right:1px solid #a0a0a0;border-bottom:1px solid #a0a0a0"><span style="left:3.80px;top:4px;font-size:12px;line-height:14px;transform:scaleX(0.8747);transform-origin:0 0;">15732781</span></td>
<td style="height:22px;border-right:1px solid #a0a0a0;border-bottom:1px solid #a0a0a0"><span style="left:3.70px;top:4px;font-size:12px;line-height:14px;transform:scaleX(0.8839);transform-origin:0 0;">DIAGPAPP01-20210308-1203.log</span></td>
</tr>
<tr style="height:22px">
<td style="height:22px;border-left:1px solid #a0a0a0;border-right:1px solid #a0a0a0;border-bottom:1px solid #a0a0a0"><span style="left:3.10px;top:4px;font-size:12px;line-height:14px;transform:scaleX(0.8956);transform-origin:0 0;">/DIAGPAPP01-20210308-1204.log</span></td>
<td style="height:22px;border-right:1px solid #a0a0a0;border-bottom:1px solid #a0a0a0"><span style="left:3.10px;top:4px;font-size:12px;line-height:14px;transform:scaleX(0.8839);transform-origin:0 0;">DIAGPAPP01-20210308-1204.log</span></td>
<td style="height:22px;border-right:1px solid #a0a0a0;border-bottom:1px solid #a0a0a0"></td>
<td style="height:22px;border-right:1px solid #a0a0a0;border-bottom:1px solid #a0a0a0"><span style="left:3.30px;top:4px;font-size:12px;line-height:14px;transform:scaleX(0.9334);transform-origin:0 0;">23/04/2021 12:29</span></td>
<td style="height:22px;border-right:1px solid #a0a0a0;border-bottom:1px solid #a0a0a0"><span style="left:3.30px;top:4px;font-size:12px;line-height:14px;transform:scaleX(0.9334);transform-origin:0 0;">23/04/2021 12:29</span></td>
<td style="height:22px;border-right:1px solid #a0a0a0;border-bottom:1px solid #a0a0a0"><span style="left:3.30px;top:4px;font-size:12px;line-height:14px;transform:scaleX(0.9334);transform-origin:0 0;">23/04/2021 12:29</span></td>
<td style="height:22px;border-right:1px solid #a0a0a0;border-bottom:1px solid #a0a0a0"><span style="left:3.80px;top:4px;font-size:12px;line-height:14px;transform:scaleX(0.8747);transform-origin:0 0;">15732781</span></td>
<td style="height:22px;border-right:1px solid #a0a0a0;border-bottom:1px solid #a0a0a0"><span style="left:3.70px;top:4px;font-size:12px;line-height:14px;transform:scaleX(0.8839);transform-origin:0 0;">DIAGPAPP01-20210308-1204.log</span></td>
</tr>
<tr style="height:22px">
<td style="height:22px;border-left:1px solid #a0a0a0;border-right:1px solid #a0a0a0;border-bottom:1px solid #a0a0a0"><span style="left:3.10px;top:4px;font-size:12px;line-height:14px;transform:scaleX(0.9002);transform-origin:0 0;">/Archived Logs/DIAGAAPP01-20210308-1233.log</span></td>
<td style="height:22px;border-right:1px solid #a0a0a0;border-bottom:1px solid #a0a0a0"><span style="left:3.10px;top:4px;font-size:12px;line-height:14px;transform:scaleX(0.8917);transform-origin:0 0;">Archived Logs/DIAGAAPP01-20210308-1233.log</span></td>
<td style="height:22px;border-right:1px solid #a0a0a0;border-bottom:1px solid #a0a0a0"></td>
<td style="height:22px;border-right:1px solid #a0a0a0;border-bottom:1px solid #a0a0a0"><span style="left:3.30px;top:4px;font-size:12px;line-height:14px;transform:scaleX(0.9334);transform-origin:0 0;">23/04/2021 12:30</span></td>
<td style="height:22px;border-right:1px solid #a0a0a0;border-bottom:1px solid #a0a0a0"><span style="left:3.30px;top:4px;font-size:12px;line-height:14px;transform:scaleX(0.9334);transform-origin:0 0;">23/04/2021 12:30</span></td>
<td style="height:22px;border-right:1px solid #a0a0a0;border-bottom:1px solid #a0a0a0"><span style="left:3.30px;top:4px;font-size:12px;line-height:14px;transform:scaleX(0.9334);transform-origin:0 0;">23/04/2021 12:30</span></td>
<td style="height:22px;border-right:1px solid #a0a0a0;border-bottom:1px solid #a0a0a0"><span style="left:3.80px;top:4px;font-size:12px;line-height:14px;transform:scaleX(0.8747);transform-origin:0 0;">17277853</span></td>
<td style="height:22px;border-right:1px solid #a0a0a0;border-bottom:1px solid #a0a0a0"><span style="left:3.70px;top:4px;font-size:12px;line-height:14px;transform:scaleX(0.8795);transform-origin:0 0;">DIAGAAPP01-20210308-1233.log</span></td>
</tr>
<tr style="height:22px">
<td style="height:22px;border-left:1px solid #a0a0a0;border-right:1px solid #a0a0a0;border-bottom:1px solid #a0a0a0"><span style="left:3.10px;top:4px;font-size:12px;line-height:14px;transform:scaleX(0.9002);transform-origin:0 0;">/Archived Logs/DIAGAAPP01-20210308-1235.log</span></td>
<td style="height:22px;border-right:1px solid #a0a0a0;border-bottom:1px solid #a0a0a0"><span style="left:3.10px;top:4px;font-size:12px;line-height:14px;transform:scaleX(0.8917);transform-origin:0 0;">Archived Logs/DIAGAAPP01-20210308-1235.log</span></td>
<td style="height:22px;border-right:1px solid #a0a0a0;border-bottom:1px solid #a0a0a0"></td>
<td style="height:22px;border-right:1px solid #a0a0a0;border-bottom:1px solid #a0a0a0"><span style="left:3.30px;top:4px;font-size:12px;line-height:14px;transform:scaleX(0.9334);transform-origin:0 0;">23/04/2021 12:30</span></td>
<td style="height:22px;border-right:1px solid #a0a0a0;border-bottom:1px solid #a0a0a0"><span style="left:3.30px;top:4px;font-size:12px;line-height:14px;transform:scaleX(0.9334);transform-origin:0 0;">23/04/2021 12:30</span></td>
<td style="height:22px;border-right:1px solid #a0a0a0;border-bottom:1px solid #a0a0a0"><span style="left:3.30px;top:4px;font-size:12px;line-height:14px;transform:scaleX(0.9334);transform-origin:0 0;">23/04/2021 12:30</span></td>
<td style="height:22px;border-right:1px solid #a0a0a0;border-bottom:1px solid #a0a0a0"><span style="left:3.80px;top:4px;font-size:12px;line-height:14px;transform:scaleX(0.8747);transform-origin:0 0;">17277853</span></td>
<td style="height:22px;border-right:1px solid #a0a0a0;border-bottom:1px solid #a0a0a0"><span style="left:3.70px;top:4px;font-size:12px;line-height:14px;transform:scaleX(0.8795);transform-origin:0 0;">DIAGAAPP01-20210308-1235.log</span></td>
</tr>
<tr style="height:22px">
<td style="height:22px;border-left:1px solid #a0a0a0;border-right:1px solid #a0a0a0;border-bottom:1px solid #a0a0a0"><span style="left:3.10px;top:4px;font-size:12px;line-height:14px;transform:scaleX(0.9032);transform-origin:0 0;">/Archived Logs/DIAGPAPP01-20210308-1203.log</span></td>
<td style="height:22px;border-right:1px solid #a0a0a0;border-bottom:1px solid #a0a0a0"><span style="left:3.10px;top:4px;font-size:12px;line-height:14px;transform:scaleX(0.8948);transform-origin:0 0;">Archived Logs/DIAGPAPP01-20210308-1203.log</span></td>
<td style="height:22px;border-right:1px solid #a0a0a0;border-bottom:1px solid #a0a0a0"></td>
<td style="height:22px;border-right:1px solid #a0a0a0;border-bottom:1px solid #a0a0a0"><span style="left:3.30px;top:4px;font-size:12px;line-height:14px;transform:scaleX(0.9334);transform-origin:0 0;">23/04/2021 12:30</span></td>
<td style="height:22px;border-right:1px solid #a0a0a0;border-bottom:1px solid #a0a0a0"><span style="left:3.30px;top:4px;font-size:12px;line-height:14px;transform:scaleX(0.9334);transform-origin:0 0;">23/04/2021 12:30</span></td>
<td style="height:22px;border-right:1px solid #a0a0a0;border-bottom:1px solid #a0a0a0"><span style="left:3.30px;top:4px;font-size:12px;line-height:14px;transform:scaleX(0.9334);transform-origin:0 0;">23/04/2021 12:30</span></td>
<td style="height:22px;border-right:1px solid #a0a0a0;border-bottom:1px solid #a0a0a0"><span style="left:3.80px;top:4px;font-size:12px;line-height:14px;transform:scaleX(0.8747);transform-origin:0 0;">15732781</span></td>
<td style="height:22px;border-right:1px solid #a0a0a0;border-bottom:1px solid #a0a0a0"><span style="left:3.70px;top:4px;font-size:12px;line-height:14px;transform:scaleX(0.8839);transform-origin:0 0;">DIAGPAPP01-20210308-1203.log</span></td>
</tr>
<tr style="height:22px">
<td style="height:22px;border-left:1px solid #a0a0a0;border-right:1px solid #a0a0a0;border-bottom:1px solid #a0a0a0"><span style="left:3.10px;top:4px;font-size:12px;line-height:14px;transform:scaleX(0.9032);transform-origin:0 0;">/Archived Logs/DIAGPAPP01-20210308-1204.log</span></td>
<td style="height:22px;border-right:1px solid #a0a0a0;border-bottom:1px solid #a0a0a0"><span style="left:3.10px;top:4px;font-size:12px;line-height:14px;transform:scaleX(0.8948);transform-origin:0 0;">Archived Logs/DIAGPAPP01-20210308-1204.log</span></td>
<td style="height:22px;border-right:1px solid #a0a0a0;border-bottom:1px solid #a0a0a0"></td>
<td style="height:22px;border-right:1px solid #a0a0a0;border-bottom:1px solid #a0a0a0"><span style="left:3.30px;top:4px;font-size:12px;line-height:14px;transform:scaleX(0.9334);transform-origin:0 0;">23/04/2021 12:30</span></td>
<td style="height:22px;border-right:1px solid #a0a0a0;border-bottom:1px solid #a0a0a0"><span style="left:3.30px;top:4px;font-size:12px;line-height:14px;transform:scaleX(0.9334);transform-origin:0 0;">23/04/2021 12:30</span></td>
<td style="height:22px;border-right:1px solid #a0a0a0;border-bottom:1px solid #a0a0a0"><span style="left:3.30px;top:4px;font-size:12px;line-height:14px;transform:scaleX(0.9334);transform-origin:0 0;">23/04/2021 12:30</span></td>
<td style="height:22px;border-right:1px solid #a0a0a0;border-bottom:1px solid #a0a0a0"><span style="left:3.80px;top:4px;font-size:12px;line-height:14px;transform:scaleX(0.8747);transform-origin:0 0;">15732781</span></td>
<td style="height:22px;border-right:1px solid #a0a0a0;border-bottom:1px solid #a0a0a0"><span style="left:3.70px;top:4px;font-size:12px;line-height:14px;transform:scaleX(0.8839);transform-origin:0 0;">DIAGPAPP01-20210308-1204.log</span></td>
</tr>
</tbody></table>
</div>
<div style="left:3px;top:296px;width:964px;height:16px;background:#f0f0f0">
<svg style="left:5px;top:4px" width="7" height="9" viewBox="0 0 7 9"><path d="M5.2 1 L1.8 4.5 L5.2 8" fill="none" stroke="#4a4a4a" stroke-width="2"/></svg>
<div style="left:17px;top:0;width:521px;height:15px;background:#cdcdcd"></div>
<svg style="left:951px;top:4px" width="7" height="9" viewBox="0 0 7 9"><path d="M1.8 1 L5.2 4.5 L1.8 8" fill="none" stroke="#4a4a4a" stroke-width="2"/></svg>
</div>
<button style="left:729px;top:319px;width:73px;height:23px;border:2px solid #0078d7;background:#e1e1e1;padding:0;margin:0;font-family:inherit"><span style="left:20.00px;top:3px;font-size:12px;line-height:14px;transform:scaleX(0.8635);transform-origin:0 0;">Close</span></button>
</section>
<div style="left:152px;top:697px;width:965px;height:1px;background:#b4a6a2"></div>
</body></html>
